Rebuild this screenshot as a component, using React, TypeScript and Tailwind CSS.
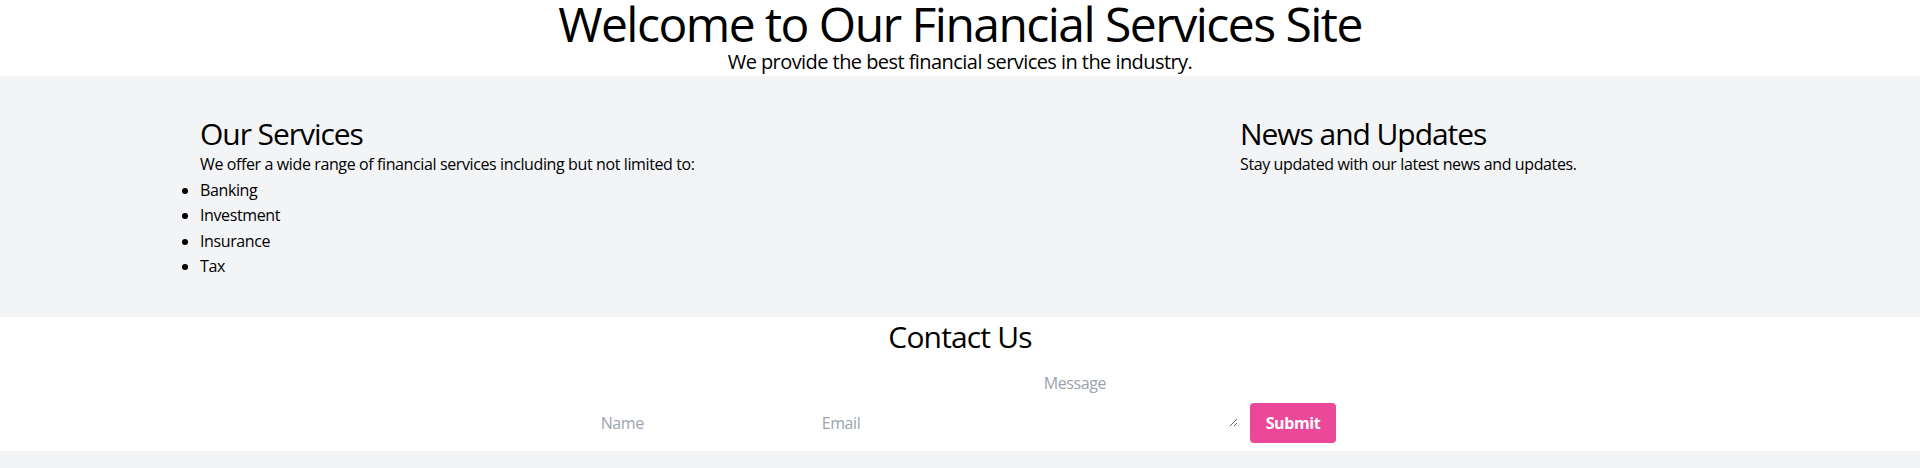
export default function App() {
  return (
    <div className="min-h-screen bg-white text-black font-['Open_Sans',sans-serif] tracking-[-0.024em]">
      {/* Header */}
      <header className="text-center">
        <h1 className="text-5xl leading-[48px] tracking-[-0.032em]">Welcome to Our Financial Services Site</h1>
        <p className="text-xl leading-7 tracking-[-0.028em]">We provide the best financial services in the industry.</p>
      </header>

      {/* Services + News */}
      <section className="bg-[#f3f4f6] pt-10 pb-[38px]">
        <div className="max-w-[1536px] mx-auto px-2 grid grid-cols-3 gap-10">
          <div className="col-span-2">
            <h2 className="text-3xl tracking-[-0.035em]">Our Services</h2>
            <p className="text-base">We offer a wide range of financial services including but not limited to:</p>
            <ul className="list-disc mt-[2px]">
              <li className="leading-[25.3px]">Banking</li>
              <li className="leading-[25.3px]">Investment</li>
              <li className="leading-[25.3px]">Insurance</li>
              <li className="leading-[25.3px]">Tax</li>
            </ul>
          </div>
          <div>
            <h2 className="text-3xl tracking-[-0.035em]">News and Updates</h2>
            <p className="text-base">Stay updated with our latest news and updates.</p>
          </div>
        </div>
      </section>

      {/* Contact */}
      <section className="bg-white pb-2">
        <h2 className="text-3xl text-center tracking-[-0.028em] pt-[2px] -mb-[2px]">Contact Us</h2>
        <form className="mt-[10px] flex justify-center items-end gap-3 pl-[9px]">
          <input type="text" placeholder="Name" className="w-[209px] h-10 px-2 bg-transparent placeholder:text-[#9ca3af] outline-none" />
          <input type="email" placeholder="Email" className="w-[210px] h-10 px-2 bg-transparent placeholder:text-[#9ca3af] outline-none" />
          <textarea placeholder="Message" rows={2} className="w-[202px] h-16 p-2 mb-4 bg-transparent placeholder:text-[#9ca3af] outline-none" />
          <button type="submit" className="px-4 py-2 bg-[#ec4899] text-white font-bold rounded">Submit</button>
        </form>
      </section>

      <footer className="bg-[#f3f4f6] h-16" />
    </div>
  );
}
